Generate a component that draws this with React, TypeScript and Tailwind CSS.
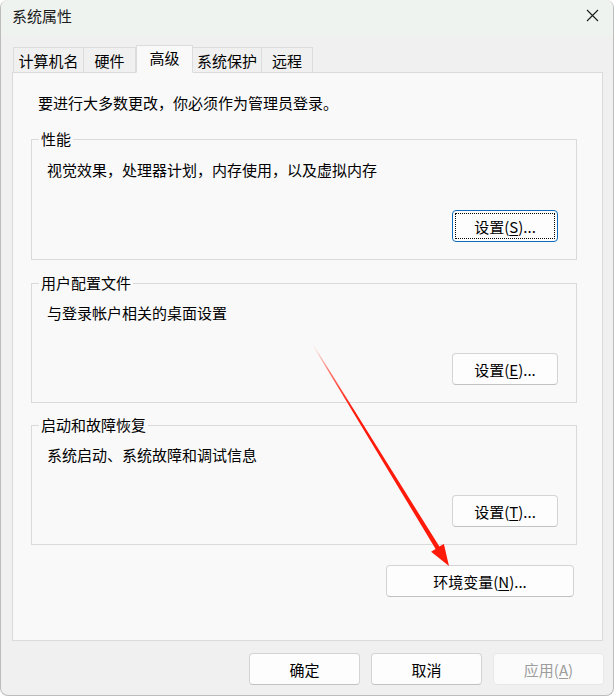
import React from 'react';

const font = { fontFamily: '"Noto Sans CJK SC", "Noto Sans", sans-serif' };

type BtnProps = {
  label: string;
  hotkey?: string;
  dots?: boolean;
  w: string;
  focused?: boolean;
  disabled?: boolean;
};

// Win11 style push button; hotkey letter is underlined inside the parens
const Btn: React.FC<BtnProps> = ({ label, hotkey, dots = true, w, focused, disabled }) => (
  <div
    className={`relative ${w} h-[32px] flex items-center justify-center rounded-[4px] border text-[15px] leading-none ${
      disabled
        ? 'bg-[#fbfbfb] border-[#e8e8e8] text-[#9d9d9d]'
        : focused
        ? 'bg-[#fdfdfd] border-[#0f6cbd] text-black'
        : 'bg-[#fdfdfd] border-[#d4d4d4] border-b-[#c2c2c2] text-black'
    }`}
  >
    {focused && <div className="absolute inset-[2px] border border-dotted border-black" />}
    <span>
      {label}
      {hotkey && (
        <>
          (<span className="underline underline-offset-2">{hotkey}</span>){dots ? '...' : ''}
        </>
      )}
    </span>
  </div>
);

type GroupProps = {
  title: string;
  desc: string;
  hotkey: string;
  focused?: boolean;
  h: string;
  pt: string;
};

const Group: React.FC<GroupProps> = ({ title, desc, hotkey, focused, h, pt }) => (
  <div className={`relative ${h} border border-[#dadada] flex flex-col justify-between ${pt} pb-[17px] pl-[15px] pr-[18px]`}>
    <span className="absolute -top-[11px] left-[7px] px-[2px] bg-[#f9f9f9] text-[15px] leading-[20px] text-black">
      {title}
    </span>
    <div className="text-[15px] leading-[20px] text-black">{desc}</div>
    <div className="flex justify-end">
      <Btn label="设置" hotkey={hotkey} w="w-[106px]" focused={focused} />
    </div>
  </div>
);

const tabs = [
  { name: '计算机名', w: 'w-[71px]' },
  { name: '硬件', w: 'w-[53px]' },
  { name: '高级', w: 'w-[57px]', active: true },
  { name: '系统保护', w: 'w-[70px]' },
  { name: '远程', w: 'w-[52px]' },
];

export default function App() {
  return (
    <div style={font} className="relative w-[614px] h-[696px] overflow-hidden bg-[#f0f0f0] border-x border-b border-[#bcbcbc] rounded-[8px] flex flex-col">
      {/* title bar */}
      <div className="h-[36px] shrink-0 bg-[#eef3ef] flex items-center justify-between pl-[11px] pr-[14px]">
        <span className="text-[15px] text-[#1b1b1b] leading-none -mt-[6px]">系统属性</span>
        <svg width="13" height="13" viewBox="0 0 13 13" className="-mt-[6px]">
          <path d="M1 1 L12 12 M12 1 L1 12" stroke="#1b1b1b" strokeWidth="1.1" />
        </svg>
      </div>

      <div className="flex-1 flex flex-col pl-[11px] pr-[10px] pt-[9px]">
        {/* tabs */}
        <div className="flex items-end h-[27px] pl-px relative z-10">
          {tabs.map((t) => (
            <div
              key={t.name}
              className={`${t.w} flex items-center justify-center text-[15px] leading-none text-black border border-[#dcdcdc] ${
                t.active
                  ? 'h-[28px] -mb-px bg-[#f9f9f9] border-b-[#f9f9f9] pb-[3px]'
                  : 'h-[25px] bg-[#f0f0f0] border-b-0 -ml-px first:ml-0'
              }`}
            >
              {t.name}
            </div>
          ))}
        </div>

        {/* tab panel */}
        <div className="h-[569px] bg-[#f9f9f9] border border-[#dadada] flex flex-col pt-[20px] pl-[18px] pr-[25px]">
          <div className="pl-[7px] text-[15px] leading-[20px] text-black">要进行大多数更改，你必须作为管理员登录。</div>
          <div className="mt-[26px] flex flex-col gap-[23px]">
            <Group title="性能" desc="视觉效果，处理器计划，内存使用，以及虚拟内存" hotkey="S" focused h="h-[121px]" pt="pt-[20px]" />
            <Group title="用户配置文件" desc="与登录帐户相关的桌面设置" hotkey="E" h="h-[120px]" pt="pt-[19px]" />
          </div>
          <div className="mt-[22px]">
            <Group title="启动和故障恢复" desc="系统启动、系统故障和调试信息" hotkey="T" h="h-[120px]" pt="pt-[19px]" />
          </div>
          <div className="mt-[20px] flex justify-end pr-[3px]">
            <Btn label="环境变量" hotkey="N" w="w-[188px]" />
          </div>
        </div>

        {/* dialog buttons */}
        <div className="flex justify-end gap-[11px] mt-[12px] -mr-px">
          <Btn label="确定" w="w-[111px]" />
          <Btn label="取消" w="w-[111px]" />
          <Btn label="应用" hotkey="A" dots={false} w="w-[111px]" disabled />
        </div>
      </div>

      {/* red annotation arrow */}
      <svg className="absolute inset-0 pointer-events-none" width="614" height="696" viewBox="0 0 614 696">
        <defs>
          <linearGradient id="ar" gradientUnits="userSpaceOnUse" x1="312" y1="345" x2="448" y2="566">
            <stop offset="0" stopColor="#ff1a0a" stopOpacity="0" />
            <stop offset="0.12" stopColor="#ff1a0a" stopOpacity="0.6" />
            <stop offset="0.3" stopColor="#ff1a0a" stopOpacity="1" />
            <stop offset="1" stopColor="#ff1a0a" stopOpacity="1" />
          </linearGradient>
        </defs>
        <polygon
          fill="url(#ar)"
          points="312.4,344.7 438.4,546.6 442.9,543.9 448,566 430.1,551.7 434.6,549.0 311.6,345.3"
        />
      </svg>
    </div>
  );
}
